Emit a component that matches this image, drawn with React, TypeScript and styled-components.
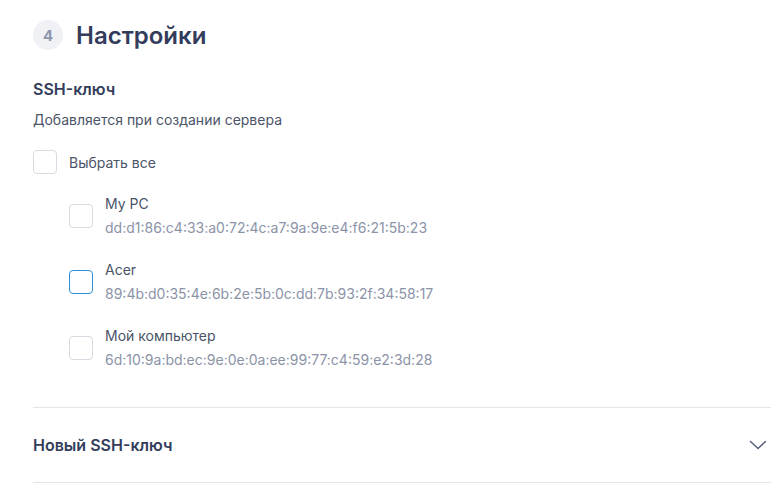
import React from 'react';
import styled, { createGlobalStyle } from 'styled-components';

const GlobalStyle = createGlobalStyle`
  html, body {
    margin: 0;
    padding: 0;
    background: #ffffff;
    font-family: Inter, "Noto Sans", sans-serif;
  }
`;

const Page = styled.div`
  padding: 20px 13px 0 33px;
  width: 784px;
  box-sizing: border-box;
`;

const Header = styled.div`
  display: flex;
  align-items: center;
  gap: 13px;
  height: 30px;
`;

const StepBadge = styled.span`
  width: 30px;
  height: 30px;
  border-radius: 50%;
  background: #eff1f5;
  color: #8e97ad;
  font-size: 15px;
  font-weight: 700;
  display: flex;
  align-items: center;
  justify-content: center;
`;

const Heading = styled.h2`
  margin: 0;
  font-size: 24px;
  font-weight: 600;
  color: #333d5b;
`;

const SectionTitle = styled.div`
  margin-top: 29px;
  font-size: 16px;
  line-height: 20px;
  font-weight: 600;
  color: #333d5b;
`;

const Description = styled.div`
  margin-top: 12px;
  font-size: 14px;
  line-height: 18px;
  color: #4b5468;
`;

const CheckRow = styled.label`
  display: flex;
  align-items: center;
  gap: 12px;
  margin-top: 21px;
  font-size: 14px;
  color: #4b5468;
`;

const Box = styled.span<{ $focused?: boolean }>`
  width: 24px;
  height: 24px;
  box-sizing: border-box;
  flex: none;
  border-radius: 4px;
  border: 1px solid ${(p) => (p.$focused ? '#2f8fd6' : '#d7dae0')};
  background: #fff;
`;

const KeyList = styled.div`
  display: flex;
  flex-direction: column;
  gap: 22px;
  margin-top: 20px;
  padding-left: 36px;
`;

const KeyItem = styled.div`
  display: flex;
  align-items: center;
  gap: 12px;
`;

const KeyText = styled.div`
  display: flex;
  flex-direction: column;
  gap: 4px;
`;

const KeyName = styled.span`
  font-size: 14px;
  line-height: 20px;
  color: #4b5468;
`;

const Fingerprint = styled.span`
  font-size: 14px;
  line-height: 20px;
  color: #8b93a7;
`;

const Accordion = styled.div`
  margin-top: 37px;
  border-top: 1px solid #e3e5e9;
  border-bottom: 1px solid #e3e5e9;
  height: 74px;
  display: flex;
  align-items: center;
  justify-content: space-between;
`;

const AccordionTitle = styled.span`
  font-size: 16px;
  font-weight: 600;
  color: #333d5b;
`;

const Chevron = styled.svg`
  width: 18px;
  height: 10px;
  margin-right: 4px;
`;

const keys = [
  { name: 'My PC', fp: 'dd:d1:86:c4:33:a0:72:4c:a7:9a:9e:e4:f6:21:5b:23' },
  { name: 'Acer', fp: '89:4b:d0:35:4e:6b:2e:5b:0c:dd:7b:93:2f:34:58:17', focused: true },
  { name: 'Мой компьютер', fp: '6d:10:9a:bd:ec:9e:0e:0a:ee:99:77:c4:59:e2:3d:28' },
];

export default function App() {
  return (
    <Page>
      <GlobalStyle />
      <Header>
        <StepBadge>4</StepBadge>
        <Heading>Настройки</Heading>
      </Header>
      <SectionTitle>SSH-ключ</SectionTitle>
      <Description>Добавляется при создании сервера</Description>
      <CheckRow>
        <Box />
        Выбрать все
      </CheckRow>
      <KeyList>
        {keys.map((k) => (
          <KeyItem key={k.fp}>
            <Box $focused={k.focused} />
            <KeyText>
              <KeyName>{k.name}</KeyName>
              <Fingerprint>{k.fp}</Fingerprint>
            </KeyText>
          </KeyItem>
        ))}
      </KeyList>
      <Accordion>
        <AccordionTitle>Новый SSH-ключ</AccordionTitle>
        <Chevron viewBox="0 0 18 10" fill="none">
          <polyline points="1.5,1.5 9,8.5 16.5,1.5" stroke="#5b6580" strokeWidth="1.6" strokeLinecap="round" strokeLinejoin="round" />
        </Chevron>
      </Accordion>
    </Page>
  );
}
